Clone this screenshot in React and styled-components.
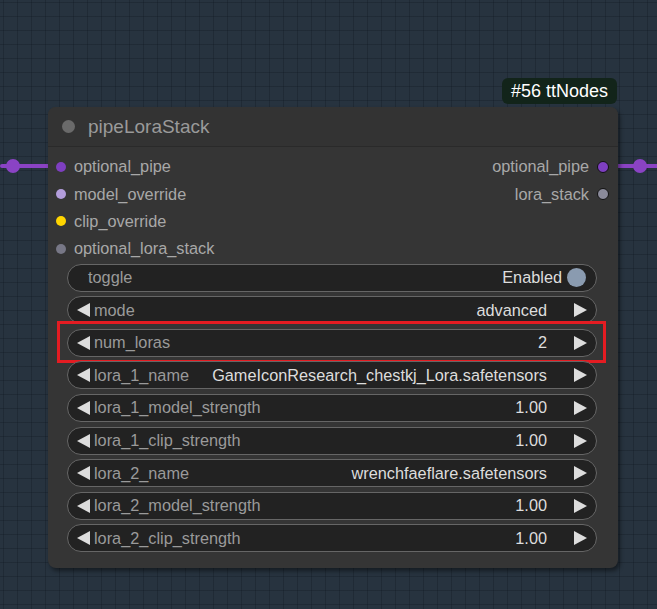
import React from "react";
import styled, { createGlobalStyle } from "styled-components";

const Global = createGlobalStyle`
  html, body { margin: 0; padding: 0; }
  body {
    width: 657px; height: 609px; overflow: hidden;
    font-family: "Liberation Sans", Arial, sans-serif;
  }
`;

const Canvas = styled.div`
  position: relative;
  width: 657px;
  height: 609px;
  background-color: #27333f;
  background-image:
    linear-gradient(to right, rgba(20, 28, 36, 0.35) 1px, transparent 1px),
    linear-gradient(to bottom, rgba(20, 28, 36, 0.35) 1px, transparent 1px);
  background-size: 14px 14px;
  background-position: 3px 2px;
  overflow: hidden;
`;

const Link = styled.div`
  position: absolute;
  top: 164px;
  left: ${(p) => p.$left}px;
  width: ${(p) => p.$width}px;
  height: 4px;
  background: #8a43c4;
  border-radius: 2px;
`;

const LinkDot = styled.div`
  position: absolute;
  top: 159px;
  left: ${(p) => p.$left}px;
  width: 14px;
  height: 14px;
  border-radius: 50%;
  background: #8a43c4;
`;

const Node = styled.div`
  position: absolute;
  left: 48px;
  top: 107px;
  width: 570px;
  background: #353535;
  border-radius: 8px;
  box-shadow: 2px 3px 4px rgba(0, 0, 0, 0.45);
  padding-bottom: 16px;
`;

const Badge = styled.div`
  position: absolute;
  right: 1px;
  top: -29px;
  height: 26px;
  padding: 0 9px;
  display: flex;
  align-items: center;
  background: #12241a;
  color: #ffffff;
  font-size: 18px;
  border-radius: 6px;
`;

const Title = styled.div`
  height: 39px;
  display: flex;
  align-items: center;
  gap: 13px;
  padding-left: 14px;
  background: #333333;
  border-bottom: 1px solid #2a2a2a;
  border-radius: 8px 8px 0 0;
  color: #9a9a9a;
  font-size: 19px;
`;

const TitleDot = styled.span`
  width: 13px;
  height: 13px;
  border-radius: 50%;
  background: #6a6a6a;
`;

const Slots = styled.div`
  display: grid;
  grid-template-columns: 1fr 1fr;
  grid-auto-rows: 27.4px;
  padding-top: 6px;
`;

const Slot = styled.div`
  display: flex;
  align-items: center;
  gap: 8px;
  font-size: 16.3px;
  color: #a8a8a8;
  justify-content: ${(p) => (p.$out ? "flex-end" : "flex-start")};
  padding: ${(p) => (p.$out ? "0 9px 0 0" : "0 0 0 8px")};
  grid-column: ${(p) => (p.$out ? 2 : 1)};
`;

const SlotDot = styled.span`
  width: 10px;
  height: 10px;
  border-radius: 50%;
  background: ${(p) => p.$color};
  box-sizing: border-box;
  border: ${(p) => (p.$out ? "1.5px solid #111" : "none")};
  flex: none;
  ${(p) => (p.$out ? "width: 12px; height: 12px;" : "")}
`;

const Widgets = styled.div`
  display: flex;
  flex-direction: column;
  gap: 4.6px;
  padding: 1px 21px 0 19px;
`;

const Widget = styled.div`
  position: relative;
  height: 28px;
  box-sizing: border-box;
  border: 1px solid #666;
  border-radius: 14px;
  background: #222222;
  display: flex;
  align-items: center;
  padding: 0 8px;
  font-size: 16.3px;
  color: #9a9a9a;
  ${(p) =>
    p.$highlight &&
    `
    &::after {
      content: "";
      position: absolute;
      left: -11px;
      right: -10px;
      top: -9px;
      bottom: -7px;
      border: 3px solid #e41c22;
      pointer-events: none;
    }
  `}
`;

const Label = styled.span`
  padding-left: ${(p) => (p.$toggle ? "12px" : "3px")};
  white-space: nowrap;
`;

const Value = styled.span`
  margin-left: auto;
  color: #dddddd;
  white-space: nowrap;
  padding-right: ${(p) => (p.$toggle ? "5px" : "26px")};
`;

const Arrow = styled.svg`
  width: 15px;
  height: 16px;
  flex: none;
  fill: #dddddd;
`;

const ToggleKnob = styled.span`
  width: 19px;
  height: 19px;
  border-radius: 50%;
  background: #8a9bb0;
  margin-right: 2px;
  flex: none;
`;

const LeftArrow = () => (
  <Arrow viewBox="0 0 15 16">
    <polygon points="14,1 14,15 1,8" />
  </Arrow>
);
const RightArrow = () => (
  <Arrow viewBox="0 0 15 16">
    <polygon points="1,1 1,15 14,8" />
  </Arrow>
);

const inputs = [
  { name: "optional_pipe", color: "#7e3fc0" },
  { name: "model_override", color: "#b39ddb" },
  { name: "clip_override", color: "#ffd500" },
  { name: "optional_lora_stack", color: "#777786" },
];
const outputs = [
  { name: "optional_pipe", color: "#7e3fc0" },
  { name: "lora_stack", color: "#8a8a9a" },
];

const widgets = [
  { label: "mode", value: "advanced" },
  { label: "num_loras", value: "2", highlight: true },
  { label: "lora_1_name", value: "GameIconResearch_chestkj_Lora.safetensors" },
  { label: "lora_1_model_strength", value: "1.00" },
  { label: "lora_1_clip_strength", value: "1.00" },
  { label: "lora_2_name", value: "wrenchfaeflare.safetensors" },
  { label: "lora_2_model_strength", value: "1.00" },
  { label: "lora_2_clip_strength", value: "1.00" },
];

export default function App() {
  return (
    <>
      <Global />
      <Canvas>
        <Link $left={0} $width={50} />
        <LinkDot $left={6} />
        <Link $left={616} $width={45} />
        <LinkDot $left={633} />
        <Node>
          <Badge>#56 ttNodes</Badge>
          <Title>
            <TitleDot />
            pipeLoraStack
          </Title>
          <Slots>
            {inputs.map((s, i) => (
              <Slot key={s.name} style={{ gridRow: i + 1 }}>
                <SlotDot $color={s.color} />
                {s.name}
              </Slot>
            ))}
            {outputs.map((s, i) => (
              <Slot key={s.name} $out style={{ gridRow: i + 1 }}>
                {s.name}
                <SlotDot $out $color={s.color} />
              </Slot>
            ))}
          </Slots>
          <Widgets>
            <Widget>
              <Label $toggle>toggle</Label>
              <Value $toggle>Enabled</Value>
              <ToggleKnob />
            </Widget>
            {widgets.map((w) => (
              <Widget key={w.label} $highlight={w.highlight}>
                <LeftArrow />
                <Label>{w.label}</Label>
                <Value>{w.value}</Value>
                <RightArrow />
              </Widget>
            ))}
          </Widgets>
        </Node>
      </Canvas>
    </>
  );
}
